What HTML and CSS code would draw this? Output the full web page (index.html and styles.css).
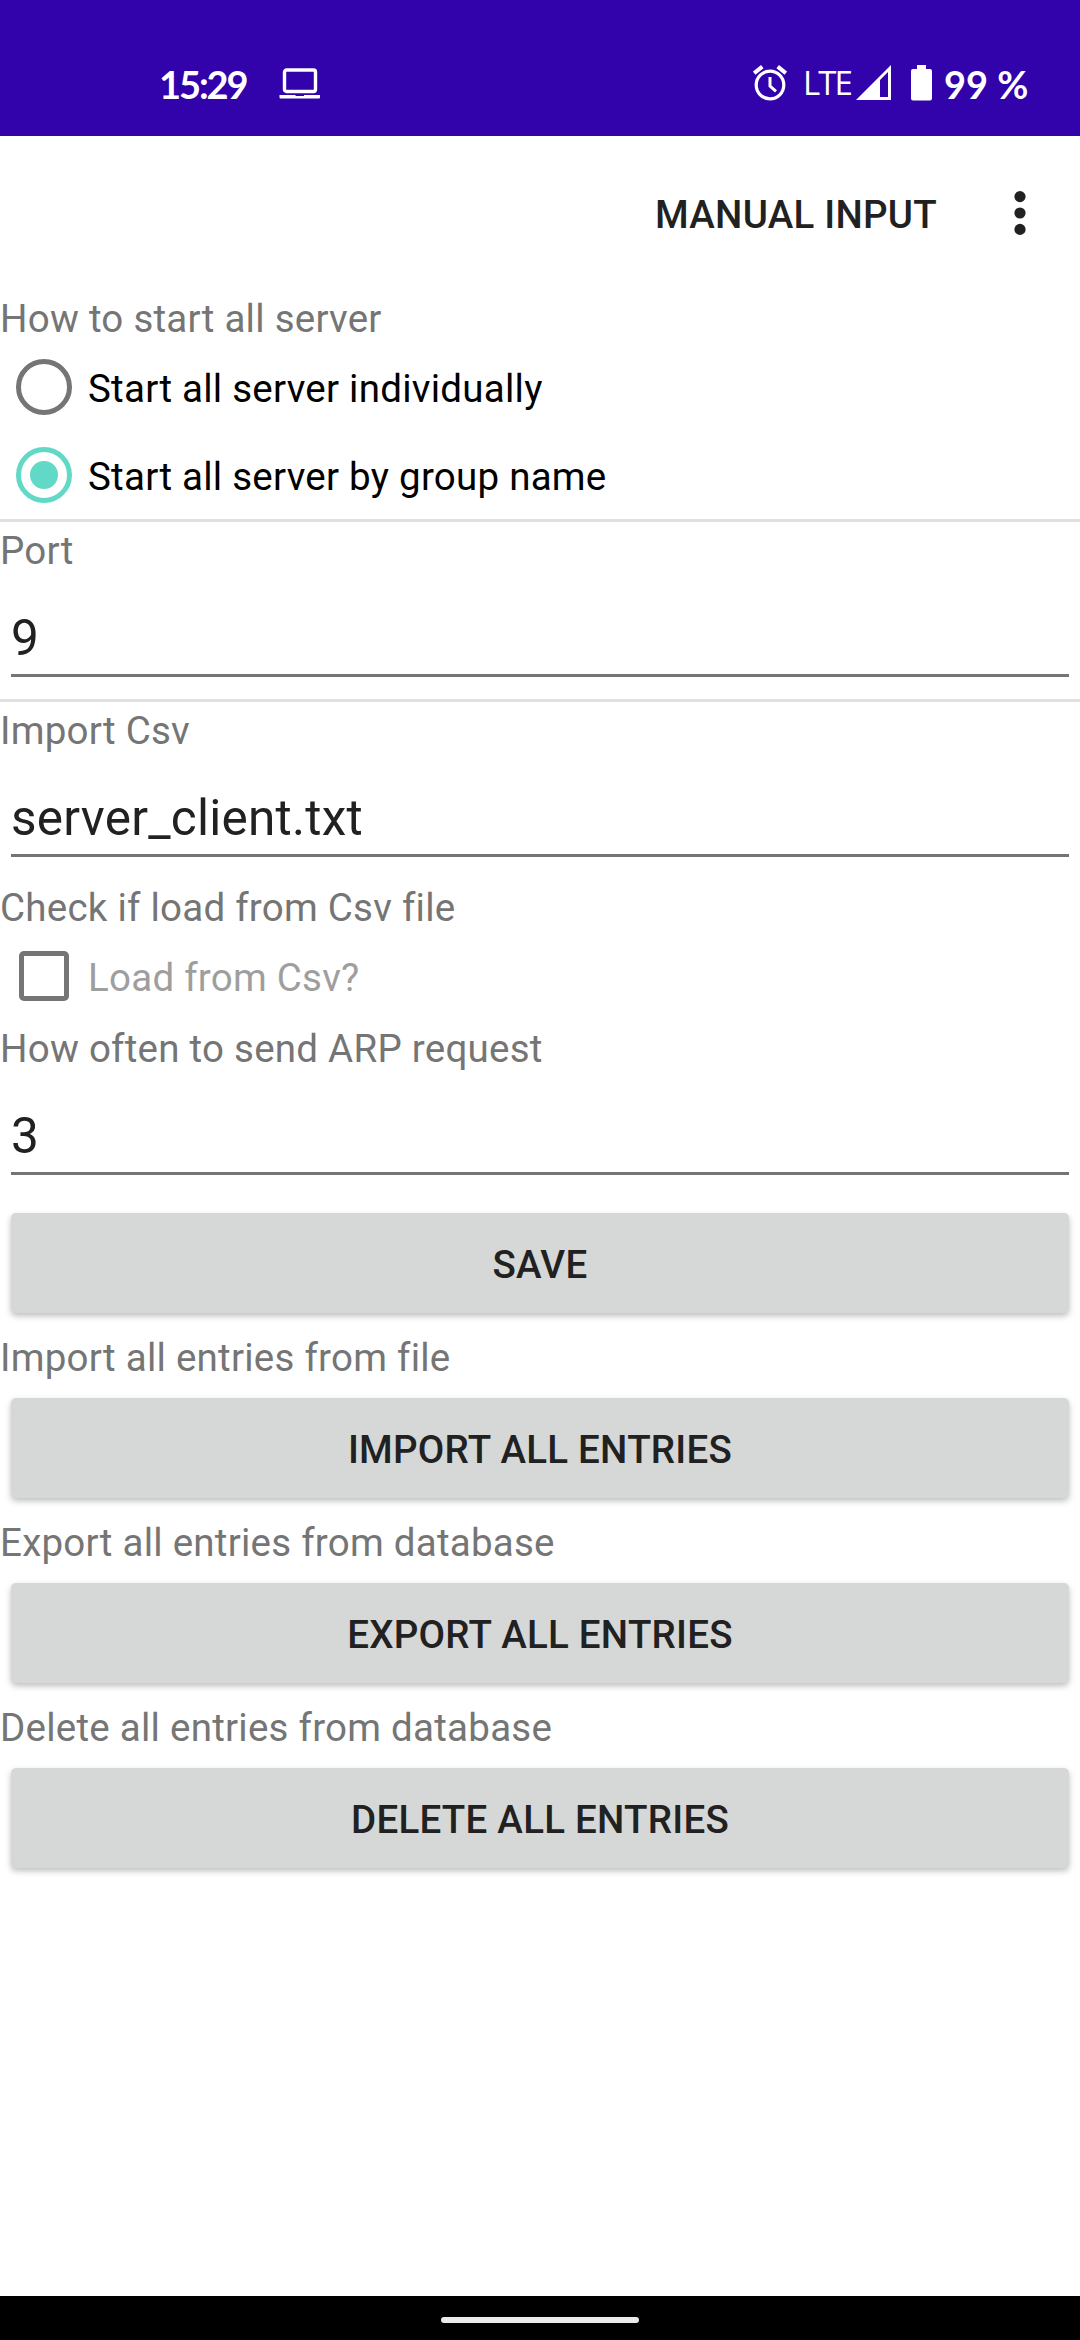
FILE: index.html
```html
<!DOCTYPE html>
<html lang="en">
<head>
<meta charset="utf-8">
<title>Settings</title>
<link rel="stylesheet" href="styles.css">
</head>
<body>
<div class="screen">
  <header class="status">
    <span class="status-time">15:29</span>
    <svg class="icon-laptop" width="42" height="32" viewBox="0 0 42 32" fill="none" stroke="#fff">
      <rect x="5.5" y="2" width="31" height="21.5" rx="2" stroke-width="3.4"/>
      <path d="M0.5 27H16.5V28H25V27H41V29.5Q41 30.5 40 30.5H1.5Q0.5 30.5 0.5 29.5Z" fill="#fff" stroke="none"/>
    </svg>
    <span class="spacer"></span>
    <svg class="icon-alarm" width="34" height="36" viewBox="0 0 34 36" fill="none" stroke="#fff">
      <circle cx="17" cy="20" r="13.8" stroke-width="3.2"/>
      <path d="M1.2 8.2L9.3 1.6M32.8 8.2L24.7 1.6" stroke-width="4"/>
      <path d="M17 12V21L23 26.4" stroke-width="3"/>
    </svg>
    <span class="status-lte">LTE</span>
    <svg class="icon-signal" width="35" height="35" viewBox="0 0 35 35">
      <path fill="#fff" fill-rule="evenodd" d="M0 35L35 0V35ZM24 15V32H32V7Z"/>
    </svg>
    <svg class="icon-battery" width="21" height="36" viewBox="0 0 21 36">
      <path fill="#fff" d="M6 0H15V4H19Q21 4 21 6V33.5Q21 35.5 19 35.5H2Q0 35.5 0 33.5V6Q0 4 2 4H6Z"/>
    </svg>
    <span class="status-level">99 %</span>
  </header>

  <nav class="toolbar">
    <span class="toolbar-action">MANUAL INPUT</span>
    <svg class="icon-more" width="12" height="44" viewBox="0 0 12 44" fill="#212121">
      <circle cx="6" cy="5.6" r="5.6"/><circle cx="6" cy="22" r="5.6"/><circle cx="6" cy="38.4" r="5.6"/>
    </svg>
  </nav>

  <main class="form">
    <div class="label">How to start all server</div>
    <div class="option"><span class="radio"></span><span class="option-text">Start all server individually</span></div>
    <div class="option"><span class="radio radio-on"></span><span class="option-text">Start all server by group name</span></div>
    <div class="divider"></div>
    <div class="label">Port</div>
    <div class="field"><div class="field-value">9</div></div>
    <div class="divider"></div>
    <div class="label">Import Csv</div>
    <div class="field"><div class="field-value">server_client.txt</div></div>
    <div class="label">Check if load from Csv file</div>
    <div class="option option-hint"><span class="checkbox"></span><span class="option-text">Load from Csv?</span></div>
    <div class="label">How often to send ARP request</div>
    <div class="field"><div class="field-value">3</div></div>
    <div class="button">SAVE</div>
    <div class="label">Import all entries from file</div>
    <div class="button">IMPORT ALL ENTRIES</div>
    <div class="label">Export all entries from database</div>
    <div class="button">EXPORT ALL ENTRIES</div>
    <div class="label">Delete all entries from database</div>
    <div class="button">DELETE ALL ENTRIES</div>
  </main>

  <footer class="navbar"><div class="navbar-pill"></div></footer>
</div>
</body>
</html>
```
FILE: styles.css
```css
* { box-sizing: border-box; }
body { margin: 0; background: #fff; }

.screen {
  display: flex;
  flex-direction: column;
  width: 1080px;
  height: 2340px;
  overflow: hidden;
  font-family: Roboto, sans-serif;
  font-size: 38.5px;
  letter-spacing: 0.25px;
  color: #212121;
}

.status {
  display: flex;
  align-items: flex-start;
  height: 136px;
  padding: 65px 52px 0 159px;
  background: #3202ab;
  color: #fff;
}
.status-time, .status-level {
  font-family: Lato, sans-serif;
  font-weight: 700;
  font-size: 38px;
  line-height: 38px;
  letter-spacing: 0;
  white-space: nowrap;
}
.status-time { width: 120px; letter-spacing: -2.1px; }
.status-level { width: 84px; }
.icon-laptop { margin-top: 3px; }
.spacer { flex: 1; }
.icon-alarm { margin-right: 16px; }
.status-lte {
  width: 53px;
  font-family: "Open Sans", sans-serif;
  font-weight: 400;
  font-size: 33px;
  line-height: 36px;
  letter-spacing: -2px;
}
.icon-signal { margin-right: 20px; }
.icon-battery { margin-right: 12px; }

.toolbar {
  display: flex;
  align-items: center;
  justify-content: flex-end;
  gap: 77px;
  height: 154px;
  padding-right: 55px;
}
.toolbar-action { padding-top: 2px; font-weight: 500; }
.icon-more { margin-right: -1px; }

.form { flex: 1; }

.label {
  height: 53px;
  padding-top: 3px;
  line-height: 52px;
  color: #757575;
  white-space: nowrap;
}

.option {
  display: flex;
  align-items: center;
  height: 88px;
  padding-left: 16px;
  color: #000;
}
.option-text { padding-top: 2px; }
.option-hint { color: #9e9e9e; }

.radio {
  display: flex;
  align-items: center;
  justify-content: center;
  width: 56px;
  height: 56px;
  margin-right: 16px;
  border: 5.5px solid #757575;
  border-radius: 50%;
}
.radio-on { border-color: #62d8c6; }
.radio-on::after {
  content: "";
  width: 28px;
  height: 28px;
  border-radius: 50%;
  background: #62d8c6;
}
.checkbox {
  width: 50px;
  height: 50px;
  margin: 0 19px 0 3px;
  border: 5.5px solid #757575;
  border-radius: 5px;
}

.divider { height: 3px; background: #e0e0e0; }

.field { height: 124px; padding: 0 11px; }
.field-value {
  height: 102px;
  padding-top: 33px;
  border-bottom: 3px solid #757575;
  font-size: 49.5px;
  line-height: 60px;
}

.button {
  height: 100px;
  margin: 16px 11px;
  border-radius: 5px;
  background: #d6d8d7;
  box-shadow: 0 3px 6px rgba(0, 0, 0, 0.26);
  font-weight: 500;
  line-height: 104px;
  text-align: center;
}

.navbar {
  display: flex;
  justify-content: center;
  height: 44px;
  padding-top: 21px;
  background: #000;
}
.navbar-pill {
  width: 198px;
  height: 6px;
  border-radius: 3px;
  background: #ebebeb;
}
```
